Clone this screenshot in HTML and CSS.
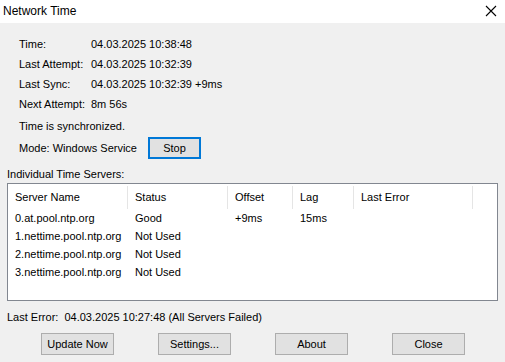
FILE: index.html
```html
<!DOCTYPE html>
<html lang="en">
<head>
    <meta charset="UTF-8">
    <title>Network Time</title>
    <link rel="stylesheet" href="styles.css">
</head>
<body>
    <div class="titlebar">
        <span class="title">Network Time</span>
        <svg class="close-x" width="12" height="12" viewBox="0 0 12 12">
            <path d="M1 1 L11 11 M11 1 L1 11" stroke="#000" stroke-width="1.1" fill="none"/>
        </svg>
    </div>
    <div class="window">
        <div class="info">
            <div class="row"><span class="label">Time:</span><span>04.03.2025 10:38:48</span></div>
            <div class="row"><span class="label">Last Attempt:</span><span>04.03.2025 10:32:39</span></div>
            <div class="row"><span class="label">Last Sync:</span><span>04.03.2025 10:32:39 +9ms</span></div>
            <div class="row"><span class="label">Next Attempt:</span><span>8m 56s</span></div>
            <div class="row status">Time is synchronized.</div>
            <div class="mode">
                <span>Mode: Windows Service</span>
                <button class="btn btn-default">Stop</button>
            </div>
        </div>

        <div class="group-label">Individual Time Servers:</div>
        <div class="list">
            <div class="list-head">
                <div class="col c1">Server Name</div>
                <div class="col c2">Status</div>
                <div class="col c3">Offset</div>
                <div class="col c4">Lag</div>
                <div class="col c5">Last Error</div>
            </div>
            <div class="list-row">
                <div class="col c1">0.at.pool.ntp.org</div>
                <div class="col c2">Good</div>
                <div class="col c3">+9ms</div>
                <div class="col c4">15ms</div>
                <div class="col c5"></div>
            </div>
            <div class="list-row">
                <div class="col c1">1.nettime.pool.ntp.org</div>
                <div class="col c2">Not Used</div>
                <div class="col c3"></div>
                <div class="col c4"></div>
                <div class="col c5"></div>
            </div>
            <div class="list-row">
                <div class="col c1">2.nettime.pool.ntp.org</div>
                <div class="col c2">Not Used</div>
                <div class="col c3"></div>
                <div class="col c4"></div>
                <div class="col c5"></div>
            </div>
            <div class="list-row">
                <div class="col c1">3.nettime.pool.ntp.org</div>
                <div class="col c2">Not Used</div>
                <div class="col c3"></div>
                <div class="col c4"></div>
                <div class="col c5"></div>
            </div>
        </div>

        <div class="last-error">Last Error:&nbsp; 04.03.2025 10:27:48 (All Servers Failed)</div>

        <div class="buttons">
            <button class="btn">Update Now</button>
            <button class="btn">Settings...</button>
            <button class="btn">About</button>
            <button class="btn">Close</button>
        </div>
    </div>
</body>
</html>
```

FILE: styles.css
```css
body {
    margin: 0;
    font-family: 'Liberation Sans', Arial, sans-serif;
    font-size: 11px;
    color: #000;
    background-color: #f0f0f0;
    width: 505px;
    height: 362px;
    overflow: hidden;
}
.titlebar {
    height: 23px;
    background-color: #ffffff;
    display: flex;
    align-items: center;
    justify-content: space-between;
    padding: 0 8px 0 3px;
}
.title {
    font-size: 12px;
    margin-top: -2px;
}
.close-x {
    margin-top: -2px;
}
.window {
    padding: 0 7px;
}
.info {
    padding: 11px 0 0 12px;
}
.row {
    display: flex;
    height: 20px;
    align-items: center;
}
.label {
    width: 72px;
}
.status {
    margin-top: 2px;
}
.mode {
    display: flex;
    align-items: center;
    height: 22px;
    margin-top: 1px;
}
.mode .btn {
    margin-left: 11px;
    width: 53px;
}
.btn {
    font-family: 'Liberation Sans', Arial, sans-serif;
    font-size: 11px;
    color: #000;
    background-color: #e1e1e1;
    border: 1px solid #adadad;
    border-radius: 0;
    height: 22px;
    width: 73px;
    padding: 0;
}
.btn-default {
    border: 2px solid #0078d7;
}
.group-label {
    margin-top: 9px;
    height: 15px;
    line-height: 13px;
}
.list {
    background-color: #ffffff;
    border: 1px solid #828790;
    height: 116px;
}
.list-head, .list-row {
    display: flex;
}
.list-head {
    height: 25px;
    align-items: center;
}
.list-head .col {
    height: 23px;
    line-height: 23px;
    margin-top: 2px;
    border-right: 1px solid #e5e5e5;
}
.list-row {
    height: 18px;
    align-items: center;
}
.col {
    padding-left: 7px;
    box-sizing: border-box;
    white-space: nowrap;
}
.c1 { width: 120px; }
.c2 { width: 100px; }
.c3 { width: 65px; }
.c4 { width: 61px; }
.c5 { width: 119px; }
.list-row .col {
    border-right: 1px solid transparent;
}
.last-error {
    margin-top: 9px;
    height: 14px;
    line-height: 14px;
}
.buttons {
    display: flex;
    gap: 44px;
    padding-left: 34px;
    margin-top: 9px;
}
```
